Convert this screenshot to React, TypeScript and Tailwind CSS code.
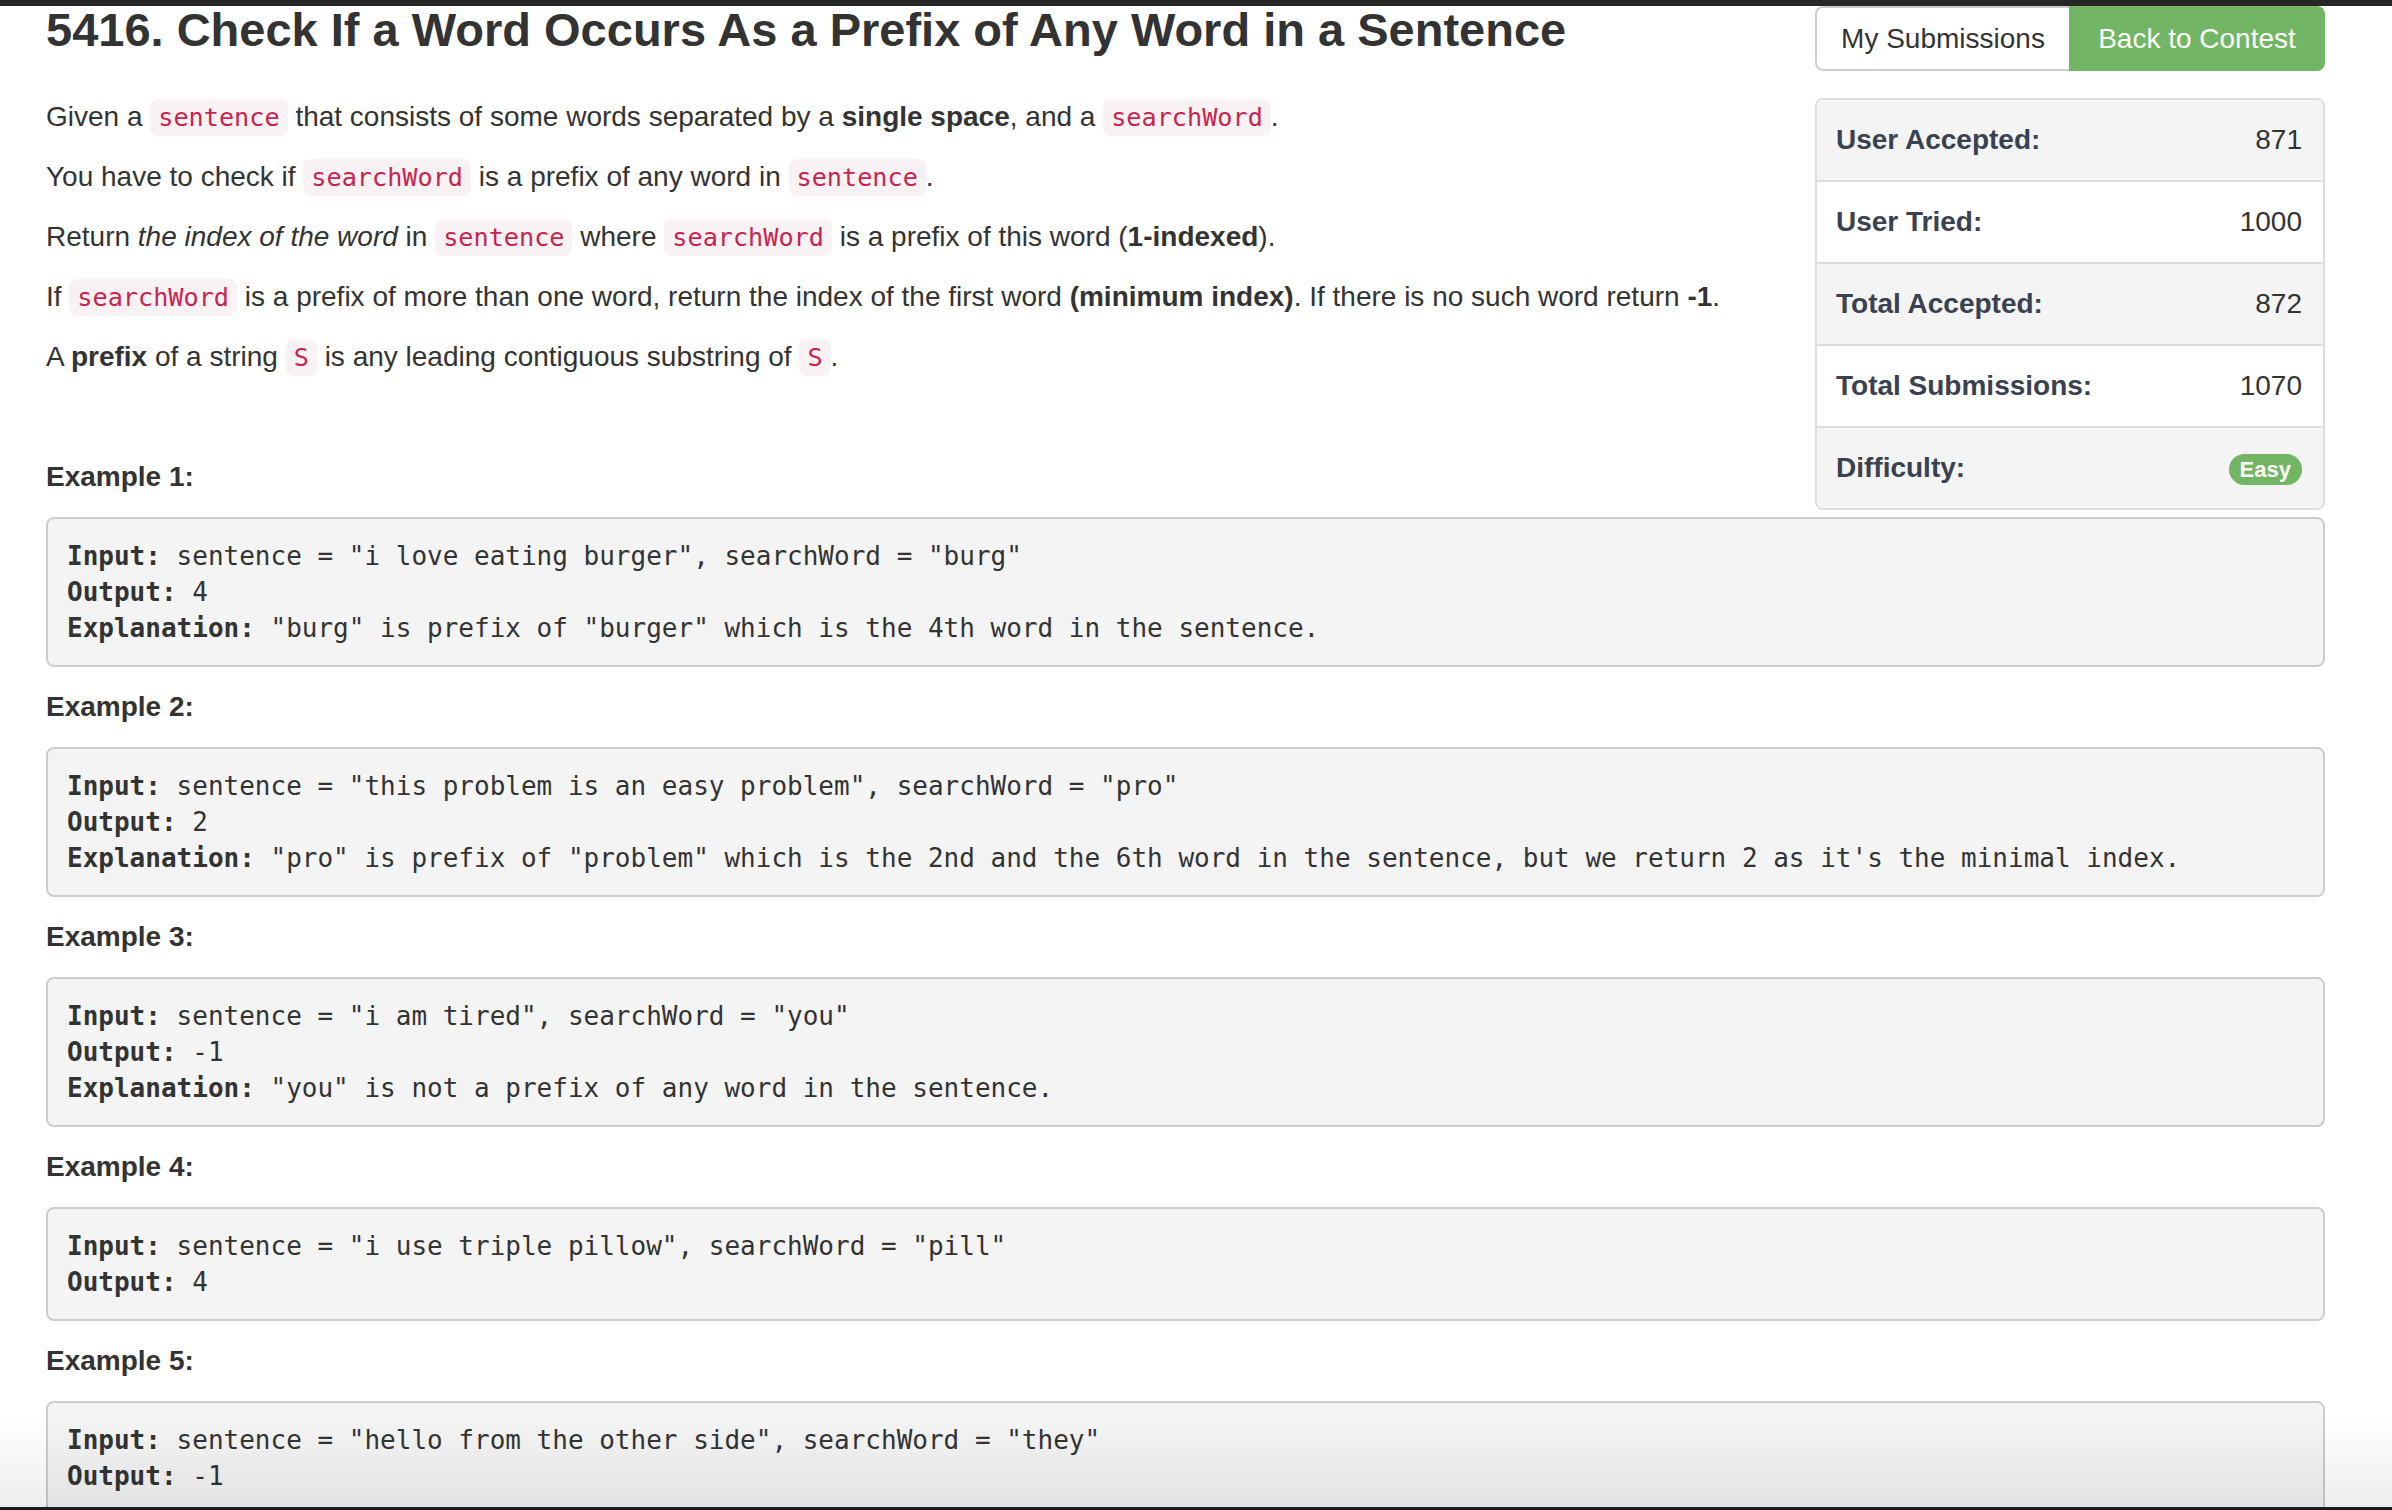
const sans = { fontFamily: '"Liberation Sans", Arial, Helvetica, sans-serif' };

function C({ children }: { children: React.ReactNode }) {
    return (
        <code className="font-['DejaVu_Sans_Mono',monospace] text-[25.2px] leading-none text-[#c7254e] bg-[#f9f2f4] px-[8px] py-[4px] rounded-[8px]">
            {children}
        </code>
    );
}

function Example({ title, lines }: { title: string; lines: [string, string][] }) {
    return (
        <>
            <p className="font-bold text-[28px] leading-[40px] mb-[20px]">{title}</p>
            <pre className="font-['DejaVu_Sans_Mono',monospace] text-[26px] leading-[36px] text-[#333] bg-[#f4f4f4] border-2 border-[#cccccc] rounded-[8px] px-[19px] py-[19px] mb-[20px] whitespace-pre-wrap">
                {lines.map(([k, v], i) => (
                    <div key={i}>
                        <strong>{k}</strong> {v}
                    </div>
                ))}
            </pre>
        </>
    );
}

const stats: [string, React.ReactNode][] = [
    ['User Accepted:', '871'],
    ['User Tried:', '1000'],
    ['Total Accepted:', '872'],
    ['Total Submissions:', '1070'],
    [
        'Difficulty:',
        <span className="bg-[#72b564] text-white font-bold text-[22px] leading-[31px] px-[11px] rounded-full inline-block">
            Easy
        </span>,
    ],
];

export default function App() {
    return (
        <div className="relative h-screen w-screen overflow-hidden bg-white text-[#333]" style={sans}>
            <div className="h-[6px] bg-[#262626]" />

            <div className="pl-[46px] pr-[67px]">
                {/* top: title + description | buttons + stats */}
                <div className="flex items-start">
                    <div className="flex-1 min-w-0">
                        <h3 className="text-[47px] leading-[48px] font-bold text-[#333] mb-[43px] whitespace-nowrap">
                            5416. Check If a Word Occurs As a Prefix of Any Word in a Sentence
                        </h3>
                        <div className="text-[28px] leading-[40px]">
                            <p className="mb-[20px] whitespace-nowrap">
                                Given a <C>sentence</C> that consists of some words separated by a <strong>single space</strong>, and a <C>searchWord</C>.
                            </p>
                            <p className="mb-[20px] whitespace-nowrap">
                                You have to check if <C>searchWord</C> is a prefix of any word in <C>sentence</C>.
                            </p>
                            <p className="mb-[20px] whitespace-nowrap">
                                Return <em>the index of the word</em> in <C>sentence</C> where <C>searchWord</C> is a prefix of this word (<strong>1-indexed</strong>).
                            </p>
                            <p className="mb-[20px] whitespace-nowrap">
                                If <C>searchWord</C> is a prefix of more than one word, return the index of the first word <strong>(minimum index)</strong>. If there is no such word return <strong>-1</strong>.
                            </p>
                            <p className="mb-[20px] whitespace-nowrap">
                                A <strong>prefix</strong> of a string <C>S</C> is any leading contiguous substring of <C>S</C>.
                            </p>
                            <p className="mb-[20px] h-[40px]">&nbsp;</p>
                            <p className="font-bold mb-[20px]">Example 1:</p>
                        </div>
                    </div>

                    <div className="w-[510px] shrink-0">
                        <div className="flex h-[65px] text-[28px]">
                            <div className="flex-1 flex items-center justify-center border-2 border-[#cccccc] border-r-0 rounded-l-[8px] bg-white text-[#333]">
                                My Submissions
                            </div>
                            <div className="flex-1 flex items-center justify-center border-2 border-[#72b564] rounded-r-[8px] bg-[#72b564] text-white">
                                Back to Contest
                            </div>
                        </div>
                        <div className="mt-[27px] border-2 border-[#dddddd] rounded-[8px] overflow-hidden">
                            {stats.map(([label, value], i) => (
                                <div
                                    key={i}
                                    className={`flex items-center justify-between pl-[19px] pr-[21px] ${i > 0 ? 'h-[82px] border-t-2 border-[#dddddd]' : 'h-[80px]'} ${i % 2 === 0 ? 'bg-[#f4f4f4]' : 'bg-white'}`}
                                >
                                    <span className="text-[28px] font-bold text-[#3a4150]">{label}</span>
                                    <span className="text-[28px] text-[#333]">{value}</span>
                                </div>
                            ))}
                        </div>
                    </div>
                </div>

                <pre className="font-['DejaVu_Sans_Mono',monospace] text-[26px] leading-[36px] text-[#333] bg-[#f4f4f4] border-2 border-[#cccccc] rounded-[8px] px-[19px] py-[19px] mb-[20px] whitespace-pre-wrap">
                    <div><strong>Input:</strong> sentence = "i love eating burger", searchWord = "burg"</div>
                    <div><strong>Output:</strong> 4</div>
                    <div><strong>Explanation:</strong> "burg" is prefix of "burger" which is the 4th word in the sentence.</div>
                </pre>

                <Example
                    title="Example 2:"
                    lines={[
                        ['Input:', 'sentence = "this problem is an easy problem", searchWord = "pro"'],
                        ['Output:', '2'],
                        ['Explanation:', `"pro" is prefix of "problem" which is the 2nd and the 6th word in the sentence, but we return 2 as it's the minimal index.`],
                    ]}
                />
                <Example
                    title="Example 3:"
                    lines={[
                        ['Input:', 'sentence = "i am tired", searchWord = "you"'],
                        ['Output:', '-1'],
                        ['Explanation:', '"you" is not a prefix of any word in the sentence.'],
                    ]}
                />
                <Example
                    title="Example 4:"
                    lines={[
                        ['Input:', 'sentence = "i use triple pillow", searchWord = "pill"'],
                        ['Output:', '4'],
                    ]}
                />
                <Example
                    title="Example 5:"
                    lines={[
                        ['Input:', 'sentence = "hello from the other side", searchWord = "they"'],
                        ['Output:', '-1'],
                    ]}
                />
            </div>

            {/* bottom shade + edge */}
            <div className="pointer-events-none absolute left-0 right-0 bottom-[3px] h-[90px] bg-gradient-to-b from-transparent to-black/[0.07]" />
            <div className="absolute left-0 right-0 bottom-0 h-[3px] bg-[#1c1c1c]" />
        </div>
    );
}
